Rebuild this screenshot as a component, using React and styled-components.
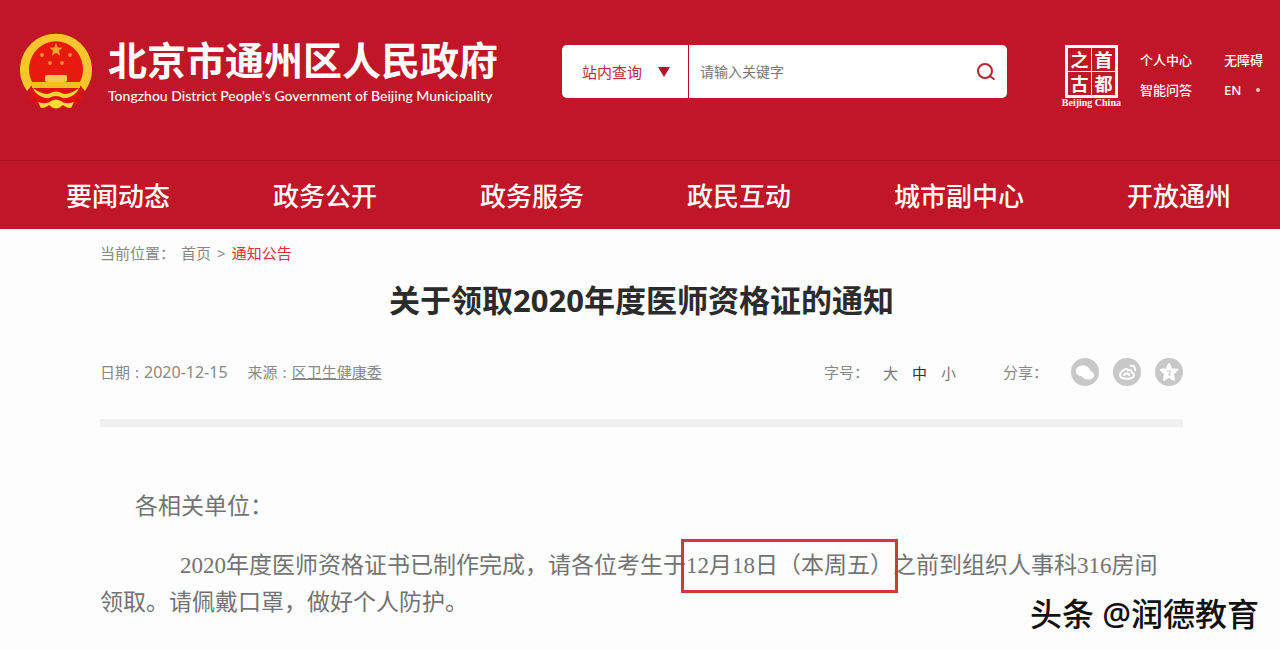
import React, { useState } from 'react';
import styled, { createGlobalStyle } from 'styled-components';

const navItems = ['要闻动态', '政务公开', '政务服务', '政民互动', '城市副中心', '开放通州'];
const fontSizes = ['大', '中', '小'];

const App = () => {
  const [keyword, setKeyword] = useState('');
  const [fontSize, setFontSize] = useState('中');

  return (
    <Page>
      <GlobalStyle />
      <Header>
        <TopBar>
          <Brand href="#">
            <Emblem />
            <BrandText>
              <SiteName>北京市通州区人民政府</SiteName>
              <SiteNameEn>Tongzhou District People's Government of Beijing Municipality</SiteNameEn>
            </BrandText>
          </Brand>
          <SearchForm role="search" onSubmit={(e) => e.preventDefault()}>
            <SelectWrap>
              <ScopeSelect aria-label="查询范围" defaultValue="site">
                <option value="site">站内查询</option>
              </ScopeSelect>
              <Caret viewBox="0 0 12 10" aria-hidden="true">
                <path d="M0 0h12L6 10z" fill="#b5142a" />
              </Caret>
            </SelectWrap>
            <SearchInput
              type="text"
              aria-label="关键字"
              placeholder="请输入关键字"
              value={keyword}
              onChange={(e) => setKeyword(e.target.value)}
            />
            <SearchButton type="submit" aria-label="搜索">
              <svg width="20" height="20" viewBox="0 0 20 20" fill="none" stroke="#b32732" strokeWidth="2">
                <circle cx="9" cy="9" r="7" />
                <path d="M13 13.500l5.500 4" />
              </svg>
            </SearchButton>
          </SearchForm>
          <Tools>
            <Seal href="#">
              <SealGrid>
                <span>之</span>
                <span>首</span>
                <span>古</span>
                <span>都</span>
              </SealGrid>
              <SealCaption>Beijing China</SealCaption>
            </Seal>
            <ToolLinks>
              <ToolLink href="#">个人中心</ToolLink>
              <ToolLink href="#">无障碍</ToolLink>
              <ToolLink href="#">智能问答</ToolLink>
              <ToolLink href="#">
                EN <Dot />
              </ToolLink>
            </ToolLinks>
          </Tools>
        </TopBar>
        <Nav>
          {navItems.map((item) => (
            <NavLink href="#" key={item}>{item}</NavLink>
          ))}
        </Nav>
      </Header>

      <Main>
        <Breadcrumb>
          当前位置：
          <Crumb href="#">首页</Crumb>
          <span>&gt;</span>
          <Crumb href="#" $active>通知公告</Crumb>
        </Breadcrumb>
        <Title>关于领取2020年度医师资格证的通知</Title>
        <Meta>
          <MetaGroup>
            <MetaItem>
              <span>日期</span>
              <span>:</span>
              <DateText>2020-12-15</DateText>
            </MetaItem>
            <MetaItem>
              <span>来源</span>
              <span>:</span>
              <Source href="#">区卫生健康委</Source>
            </MetaItem>
          </MetaGroup>
          <MetaTools>
            <SizePicker>
              <span>字号：</span>
              {fontSizes.map((size) => (
                <SizeButton
                  type="button"
                  key={size}
                  $active={size === fontSize}
                  onClick={() => setFontSize(size)}
                >
                  {size}
                </SizeButton>
              ))}
            </SizePicker>
            <span>分享：</span>
            <ShareList>
              <ShareButton type="button" aria-label="微信">
                <svg viewBox="0 0 28 28">
                  <path
                    d="M12 7.500c4 0 6.500 2.500 7.500 5.500 2.500 1 4 2.500 3.500 5-.3 2.500-3 4-5.500 3.500-3 .3-5.500-1-7-3.500-3 0-5.500-2-5.500-5 0-3.500 3-5.500 7-5.500z"
                    fill="#fff"
                  />
                </svg>
              </ShareButton>
              <ShareButton type="button" aria-label="微博">
                <svg viewBox="0 0 28 28" fill="none" stroke="#fff" strokeWidth="2">
                  <path d="M13 11c-3 .5-6 4-6 6 0 5 14 5 14 0 0-2-2.500-2-2.500-3 0-2.600-2.500-2-3.500-1.500 0-1-1-1.700-2-1.500z" />
                  <path d="M11 18c0-3.500 5-3.500 5.500 0" />
                  <path d="M17 8c3.500-1 6 1.500 5 5" />
                </svg>
              </ShareButton>
              <ShareButton type="button" aria-label="收藏">
                <svg viewBox="0 0 28 28">
                  <path
                    d="M14 6l2.300 5.300 6 .5-4.500 4 1.300 6L14 18.700 8.900 21.800l1.300-6-4.500-4 6-.5z"
                    fill="#fff"
                    stroke="#fff"
                    strokeWidth="2"
                    strokeLinejoin="round"
                  />
                  <path d="M12 13h4l-2.500 4H16" fill="none" stroke="#c8c8c8" strokeWidth="1" />
                </svg>
              </ShareButton>
            </ShareList>
          </MetaTools>
        </Meta>
        <Article>
          <Greeting>各相关单位：</Greeting>
          <Paragraph>
            2020年度医师资格证书已制作完成，请各位考生于<Highlight>12月18日（本周五）</Highlight>之前到组织人事科316房间领取。请佩戴口罩，做好个人防护。
          </Paragraph>
        </Article>
      </Main>
      <Watermark>头条 @润德教育</Watermark>
    </Page>
  );
};

const Emblem = () => (
  <EmblemSvg viewBox="0 0 74 80" aria-hidden="true">
    <path d="M8 52h58l-3 17-14 8H25L11 69z" fill="#cf1420" />
    <path d="M9 58A33 33 0 1 1 65 58z" fill="#e8190f" />
    <path
      d="M8 59A36 36 0 1 1 66 59L60 52A27 28 0 1 0 14 52z"
      fill="#f8c62c"
    />
    <path d="M11 55h52l-1 12-13 8H25l-13-8z" fill="#dc140f" />
    <path d="M37 11l1.800 4.500 4.700.3-3.600 3 1.200 4.700-4.100-2.600-4.100 2.600 1.200-4.700-3.600-3 4.700-.3z" fill="#f3a52c" />
    <g fill="#f08a2a">
      <circle cx="23" cy="23" r="2" />
      <circle cx="51" cy="23" r="2" />
      <circle cx="31" cy="31" r="2" />
      <circle cx="43" cy="31" r="2" />
    </g>
    <rect x="26" y="43" width="22" height="7" rx="2" fill="#f8ca45" />
    <path d="M13 50h48v6H13z" fill="#f5bd20" />
    <path d="M14 56q8 6 15 6 8-5 16 0 7 0 15-6l-2 4q-7 7-14 6-7-4-14 0-7 1-14-6z" fill="#ffd62d" />
    <path d="M19 70q9 3 13-1 5-3 10 0 4 4 13 1l-3 6q-5 0-8-3-7 7-14 0-3 3-8 3z" fill="#ffdd35" />
  </EmblemSvg>
);

const GlobalStyle = createGlobalStyle`
  * {
    box-sizing: border-box;
  }

  body {
    margin: 0;
    background: #fdfdfd;
    font-family: "Noto Sans", "Noto Sans CJK SC", sans-serif;
    font-size: 15px;
    color: #888;
  }

  a {
    color: inherit;
    text-decoration: none;
  }

  button, input, select {
    font-family: inherit;
    border: none;
    background: none;
    padding: 0;
  }
`;

const Page = styled.div`
  position: relative;
  min-height: 100vh;
  overflow: hidden;
`;

const Header = styled.header`
  background: #c01627;
  color: #fff;
`;

const TopBar = styled.div`
  display: flex;
  align-items: flex-start;
  padding: 32px 17px 0 19px;
  height: 160px;
`;

const Brand = styled.a`
  display: flex;
  gap: 15px;
  margin-right: 64px;
`;

const EmblemSvg = styled.svg`
  width: 74px;
  height: 80px;
`;

const BrandText = styled.div`
  display: flex;
  flex-direction: column;
  white-space: nowrap;
`;

const SiteName = styled.span`
  font-size: 39px;
  font-weight: 700;
  line-height: 56px;
`;

const SiteNameEn = styled.span`
  font-family: Lato, sans-serif;
  font-size: 14px;
  font-weight: 500;
  line-height: 16px;
`;

const SearchForm = styled.form`
  display: flex;
  flex: 0 1 445px;
  height: 53px;
  margin-top: 13px;
  background: #fff;
  border-radius: 5px;
`;

const SelectWrap = styled.div`
  display: flex;
  align-items: center;
  gap: 15px;
  width: 127px;
  padding-left: 20px;
  border-right: 1px solid #b5142a;
`;

const ScopeSelect = styled.select`
  appearance: none;
  color: #c4283a;
  font-size: 15px;
`;

const Caret = styled.svg`
  width: 12px;
  height: 10px;
`;

const SearchInput = styled.input`
  flex: 1;
  min-width: 0;
  padding-left: 11px;
  font-size: 14px;
  outline: none;

  &::placeholder {
    color: #777;
  }
`;

const SearchButton = styled.button`
  display: flex;
  align-items: center;
  justify-content: center;
  width: 42px;
  cursor: pointer;
`;

const Tools = styled.div`
  display: flex;
  gap: 19px;
  margin: 13px 0 0 auto;
`;

const Seal = styled.a`
  display: flex;
  flex-direction: column;
  align-items: center;
`;

const SealGrid = styled.div`
  display: grid;
  grid-template-columns: 1fr 1fr;
  gap: 1px;
  width: 53px;
  height: 53px;
  padding: 3px;
  background: #fff;

  span {
    display: flex;
    align-items: center;
    justify-content: center;
    background: #c01627;
    font-size: 18px;
    font-weight: 700;
    line-height: 20px;
  }
`;

const SealCaption = styled.span`
  font-family: "Liberation Serif", serif;
  font-size: 10px;
  font-weight: 700;
  line-height: 10px;
`;

const ToolLinks = styled.div`
  display: grid;
  grid-template-columns: auto auto;
  column-gap: 32px;
  row-gap: 10px;
  align-content: start;
  padding-top: 5px;
`;

const ToolLink = styled.a`
  display: flex;
  align-items: center;
  gap: 15px;
  font-size: 13px;
  font-weight: 500;
  line-height: 20px;
`;

const Dot = styled.i`
  width: 4px;
  height: 4px;
  border-radius: 50%;
  background: #f3c3c6;
`;

const Nav = styled.nav`
  display: flex;
  justify-content: space-between;
  padding: 2px 49px 0 66px;
  border-top: 1px solid #a51220;
`;

const NavLink = styled.a`
  font-size: 26px;
  font-weight: 500;
  line-height: 66px;
`;

const Main = styled.main`
  padding: 12px 97px 0 100px;
`;

const Breadcrumb = styled.nav`
  display: flex;
  gap: 6px;
  line-height: 24px;
`;

const Crumb = styled.a`
  color: ${({ $active }) => ($active ? '#d8323c' : '#888')};
`;

const Title = styled.h1`
  margin: 12px 0 0;
  color: #2b2b2b;
  font-size: 31px;
  font-weight: 700;
  line-height: 46px;
  text-align: center;
`;

const Meta = styled.div`
  display: flex;
  justify-content: space-between;
  align-items: center;
  margin-top: 35px;
  padding-bottom: 33px;
  border-bottom: 8px solid #f0f0f1;
  line-height: 28px;
`;

const MetaGroup = styled.div`
  display: flex;
  gap: 20px;
`;

const MetaItem = styled.div`
  display: flex;
  gap: 5px;
`;

const DateText = styled.time`
  font-size: 16px;
`;

const Source = styled.a`
  text-decoration: underline;
`;

const MetaTools = styled.div`
  display: flex;
  align-items: center;
  gap: 23px;
`;

const SizePicker = styled.div`
  display: flex;
  gap: 14px;
  margin-right: 24px;
`;

const SizeButton = styled.button`
  color: ${({ $active }) => ($active ? '#333' : '#777')};
  font-size: 15px;
  cursor: pointer;
`;

const ShareList = styled.div`
  display: flex;
  gap: 14px;
`;

const ShareButton = styled.button`
  width: 28px;
  height: 28px;
  border-radius: 50%;
  background: #c8c8c8;
  cursor: pointer;

  svg {
    display: block;
  }
`;

const Article = styled.article`
  padding: 61px 12px 0 0;
  color: #737373;
  font-family: "Liberation Serif", "Noto Sans CJK SC", serif;
  font-size: 23px;
  line-height: 37px;
`;

const Greeting = styled.p`
  margin: 0;
  padding-left: 35px;
`;

const Paragraph = styled.p`
  margin: 22px 0 0;
  text-indent: 80px;
`;

const Highlight = styled.mark`
  padding: 9px 0 10px;
  outline: 3px solid #d03a36;
  outline-offset: 2px;
  background: none;
  color: inherit;
`;

const Watermark = styled.div`
  position: absolute;
  right: 21px;
  bottom: 12px;
  color: #111;
  font-size: 32px;
  font-weight: 500;
  line-height: 48px;
  text-shadow: 1px 1px 0 #fff;
`;

export default App;
